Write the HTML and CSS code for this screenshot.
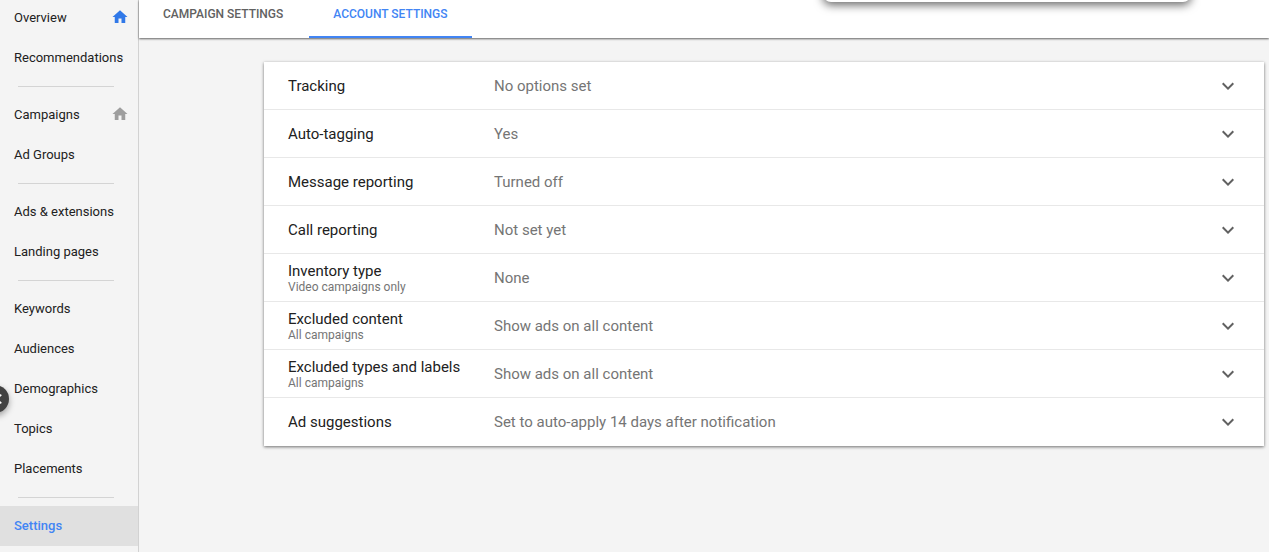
FILE: index.html
```html
<!DOCTYPE html>
<html lang="en">
<head>
<meta charset="utf-8">
<meta name="viewport" content="width=device-width, initial-scale=1">
<title>Account settings</title>
<link rel="stylesheet" href="styles.css">
</head>
<body>
<svg class="symbols" aria-hidden="true">
  <symbol id="home" viewBox="0 0 24 24"><path d="M10 20v-6h4v6h5v-8h3L12 3 2 12h3v8z"/></symbol>
  <symbol id="chevron" viewBox="0 0 24 24"><path d="M7.41 8.59 12 13.17l4.59-4.58L18 10l-6 6-6-6z"/></symbol>
</svg>
<div class="app">
  <nav class="sidebar" aria-label="Account">
    <ul class="group">
      <li><a class="nav-link" href="#">Overview <svg class="home home-active" aria-hidden="true"><use href="#home"/></svg></a></li>
      <li><a class="nav-link" href="#">Recommendations</a></li>
    </ul>
    <ul class="group">
      <li><a class="nav-link" href="#">Campaigns <svg class="home" aria-hidden="true"><use href="#home"/></svg></a></li>
      <li><a class="nav-link" href="#">Ad Groups</a></li>
    </ul>
    <ul class="group">
      <li><a class="nav-link" href="#">Ads &amp; extensions</a></li>
      <li><a class="nav-link" href="#">Landing pages</a></li>
    </ul>
    <ul class="group">
      <li><a class="nav-link" href="#">Keywords</a></li>
      <li><a class="nav-link" href="#">Audiences</a></li>
      <li><a class="nav-link" href="#">Demographics</a></li>
      <li><a class="nav-link" href="#">Topics</a></li>
      <li><a class="nav-link" href="#">Placements</a></li>
    </ul>
    <ul class="group">
      <li><a class="nav-link nav-current" href="#" aria-current="page">Settings</a></li>
    </ul>
    <button class="collapse" type="button" aria-label="Collapse navigation">
      <svg class="collapse-icon" viewBox="0 0 24 24" aria-hidden="true"><path d="M15.41 7.41 14 6l-6 6 6 6 1.41-1.41L10.83 12z"/></svg>
    </button>
  </nav>
  <div class="content">
    <header class="tabs">
      <a class="tab" href="#">CAMPAIGN SETTINGS</a>
      <a class="tab tab-current" href="#" aria-current="page">ACCOUNT SETTINGS</a>
      <div class="popup"></div>
    </header>
    <main class="main">
      <div class="card">
        <button class="row" type="button"><span class="name">Tracking</span><span class="value">No options set</span><svg class="chevron" aria-hidden="true"><use href="#chevron"/></svg></button>
        <button class="row" type="button"><span class="name">Auto-tagging</span><span class="value">Yes</span><svg class="chevron" aria-hidden="true"><use href="#chevron"/></svg></button>
        <button class="row" type="button"><span class="name">Message reporting</span><span class="value">Turned off</span><svg class="chevron" aria-hidden="true"><use href="#chevron"/></svg></button>
        <button class="row" type="button"><span class="name">Call reporting</span><span class="value">Not set yet</span><svg class="chevron" aria-hidden="true"><use href="#chevron"/></svg></button>
        <button class="row" type="button"><span class="name">Inventory type<small class="scope">Video campaigns only</small></span><span class="value">None</span><svg class="chevron" aria-hidden="true"><use href="#chevron"/></svg></button>
        <button class="row" type="button"><span class="name">Excluded content<small class="scope">All campaigns</small></span><span class="value">Show ads on all content</span><svg class="chevron" aria-hidden="true"><use href="#chevron"/></svg></button>
        <button class="row" type="button"><span class="name">Excluded types and labels<small class="scope">All campaigns</small></span><span class="value">Show ads on all content</span><svg class="chevron" aria-hidden="true"><use href="#chevron"/></svg></button>
        <button class="row" type="button"><span class="name">Ad suggestions</span><span class="value">Set to auto-apply 14 days after notification</span><svg class="chevron" aria-hidden="true"><use href="#chevron"/></svg></button>
      </div>
    </main>
  </div>
</div>
</body>
</html>
```
FILE: styles.css
```css
* {
  box-sizing: border-box;
}

body {
  margin: 0;
  background: #f4f4f4;
  color: #212121;
  font-family: Roboto, Arial, sans-serif;
}

.symbols {
  display: none;
}

.app {
  display: flex;
  min-height: 100vh;
  overflow: hidden;
}

.sidebar {
  position: relative;
  flex: 0 0 139px;
  border-right: 1px solid #d2d2d2;
}

.group {
  margin: 0;
  padding: 0;
  list-style: none;
}

.group:first-child {
  margin-top: -2px;
}

.group + .group::before {
  content: "";
  display: block;
  height: 1px;
  margin: 8px 24px 8px 18px;
  background: #d4d4d4;
}

.nav-link {
  display: flex;
  align-items: center;
  justify-content: space-between;
  height: 40px;
  padding: 0 9px 2px 14px;
  color: inherit;
  font-size: 13px;
  white-space: nowrap;
  text-decoration: none;
}

.nav-current {
  background: #e0e0e0;
  color: #4285f4;
  font-weight: 500;
}

.home {
  width: 18px;
  height: 18px;
  fill: #9e9e9e;
}

.home-active {
  fill: #3078e8;
}

.collapse {
  position: absolute;
  top: 385px;
  left: -19px;
  width: 28px;
  height: 28px;
  padding: 0;
  border: 0;
  border-radius: 50%;
  background: #424242;
  box-shadow: 0 3px 6px rgba(0, 0, 0, 0.35);
}

.collapse-icon {
  display: block;
  width: 20px;
  height: 20px;
  margin-left: 8px;
  fill: #fff;
}

.content {
  flex: 1;
  min-width: 0;
}

.tabs {
  position: relative;
  display: flex;
  gap: 2px;
  background: #fff;
  box-shadow: 0 1px 2px rgba(0, 0, 0, 0.6);
}

.tab {
  padding: 6px 24px 14px;
  border-bottom: 2px solid transparent;
  color: #616161;
  font-size: 12px;
  font-weight: 500;
  line-height: 16px;
  text-decoration: none;
  white-space: nowrap;
}

.tab-current {
  border-color: #4285f4;
  color: #4285f4;
}

.popup {
  position: absolute;
  top: -22px;
  right: 78px;
  width: 368px;
  height: 24px;
  border-radius: 8px;
  background: #fff;
  box-shadow: 0 3px 10px rgba(0, 0, 0, 0.6);
}

.main {
  padding: 24px 5px 24px 125px;
}

.card {
  background: #fff;
  box-shadow: 0 1px 3px rgba(0, 0, 0, 0.55);
}

.row {
  display: flex;
  align-items: center;
  width: 100%;
  height: 48px;
  padding: 0 24px;
  border: 0;
  border-bottom: 1px solid #e8e8e8;
  background: none;
  color: inherit;
  font-family: inherit;
  font-size: 15px;
  line-height: 18px;
  text-align: left;
}

.row:last-child {
  border-bottom-color: transparent;
}

.name {
  flex: 0 0 206px;
}

.scope {
  display: block;
  color: #757575;
  font-size: 12px;
  line-height: 14px;
}

.value {
  flex: 1;
  color: #757575;
}

.chevron {
  width: 24px;
  height: 24px;
  fill: #616161;
}
```
